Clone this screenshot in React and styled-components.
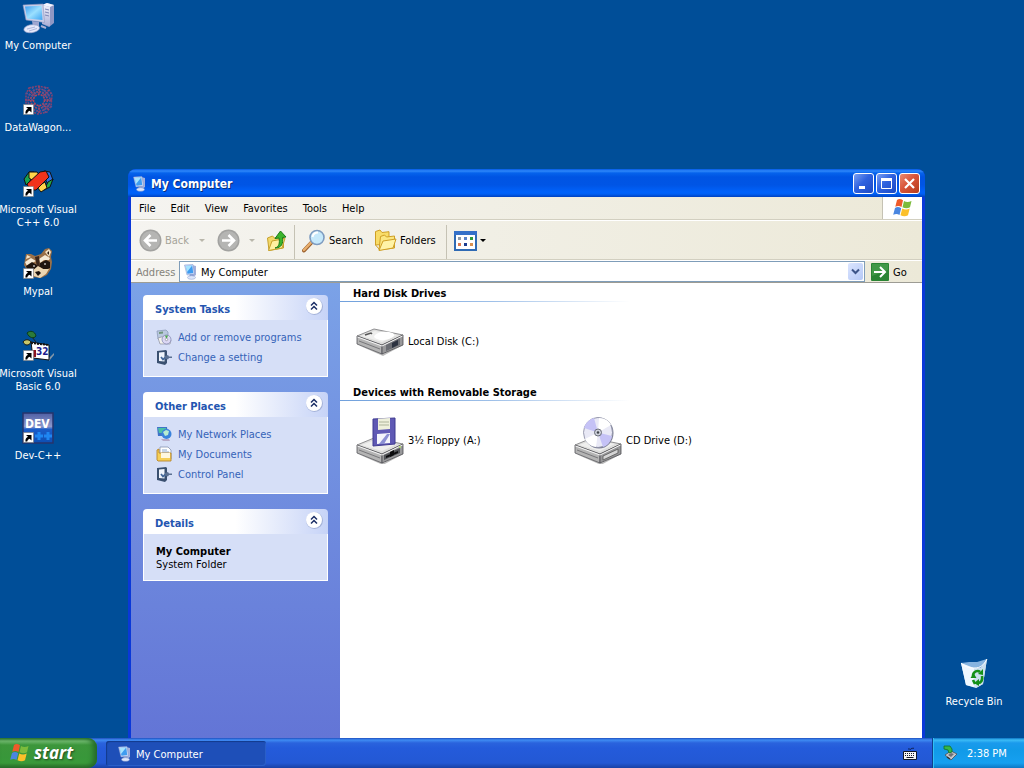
import React from "react";
import styled, { createGlobalStyle } from "styled-components";

const GlobalStyle = createGlobalStyle`
    *, *::before, *::after { box-sizing: border-box; }
    html, body, #root { height: 100%; margin: 0; }
    body, button, input {
        font-family: "DejaVu Sans Condensed", "DejaVu Sans", sans-serif;
        font-size: 11px;
        line-height: 13px;
    }
    body { overflow: hidden; }
    button {
        margin: 0;
        padding: 0;
        border: 0;
        background: none;
        color: inherit;
    }
    svg { display: block; flex: none; }
    h1, h2, h3, p, ul { margin: 0; padding: 0; }
`;

/* ---------- desktop ---------- */

const Desktop = styled.div`
    position: relative;
    display: flex;
    flex-direction: column;
    height: 100%;
    background: #004e98;
    overflow: hidden;
`;

const IconColumn = styled.div`
    flex: 1;
    display: flex;
    flex-direction: column;
    align-items: flex-start;
    min-height: 0;
`;

const Shortcut = styled.button`
    display: flex;
    flex-direction: column;
    align-items: center;
    gap: 5px;
    flex: none;
    width: 76px;
    height: 82px;
    padding-top: 2px;
    color: #fff;
    text-align: center;
`;

const ShortcutLabel = styled.span`
    display: block;
    white-space: pre;
`;

const BinCorner = styled.div`
    position: absolute;
    right: 12px;
    bottom: 30px;
`;

/* ---------- window ---------- */

const Window = styled.section`
    position: absolute;
    left: 128px;
    right: 99px;
    top: 169px;
    bottom: 30px;
    display: flex;
    flex-direction: column;
    padding: 0 3px;
    border-radius: 8px 8px 0 0;
    background: #0a38d8;
    overflow: hidden;
`;

const TitleBar = styled.header`
    display: flex;
    align-items: center;
    gap: 3px;
    flex: none;
    height: 28px;
    margin: 0 -3px;
    padding: 1px 5px 0 4px;
    color: #fff;
    background: linear-gradient(#0058e6 0, #2f88fa 2px, #0663ec 4px, #0054e3 8px, #0055e5 16px, #0062fb 23px, #0060f4 25px, #0041c0 28px);
`;

const TitleText = styled.h1`
    flex: 1;
    padding-top: 1px;
    font-size: 12px;
    line-height: 16px;
    font-weight: bold;
    text-shadow: 1px 1px #0a3078;
`;

const TitleButtons = styled.div`
    display: flex;
    gap: 2px;
`;

const TitleButton = styled.button`
    display: grid;
    place-items: center;
    width: 21px;
    height: 21px;
    border: 1px solid #fff;
    border-radius: 3px;
    background: ${p => p.$close
        ? "linear-gradient(135deg, #e88a70, #d9553a 45%, #b43c1c)"
        : "linear-gradient(135deg, #7a9ff2, #2f62df 45%, #1c49c4)"};
`;

const Bars = styled.div`
    flex: none;
    background: linear-gradient(90deg, #f5f4f0, #ece9d8);
    border-bottom: 1px solid #9d9c94;
`;

const MenuRow = styled.nav`
    display: flex;
    align-items: stretch;
    height: 23px;
    border-bottom: 1px solid #d2cfc0;
`;

const MenuItem = styled.button`
    padding: 0 7px 0 8px;
`;

const FlagBox = styled.div`
    display: grid;
    place-items: center;
    width: 40px;
    margin-left: auto;
    border-left: 1px solid #c5c2b4;
    background: #fff;
`;

const ToolRow = styled.div`
    display: flex;
    align-items: center;
    height: 40px;
    padding: 1px 8px 0;
    border-top: 1px solid #fff;
    border-bottom: 1px solid #d2cfc0;
`;

const ToolButton = styled.button`
    display: flex;
    align-items: center;
    gap: 3px;
    flex: none;
    width: ${p => p.$width}px;
    color: ${p => (p.$off ? "#a5a399" : "#000")};
`;

const Caret = styled.span`
    margin-left: ${p => p.$gap || 0}px;
    border: 3px solid transparent;
    border-top-color: ${p => (p.$off ? "#b9b7ab" : "#000")};
    border-bottom: 0;
`;

const Divider = styled.span`
    align-self: stretch;
    width: 1px;
    margin: 3px 7px 0 6px;
    background: #c5c2b4;
`;

const AddressRow = styled.form`
    display: flex;
    align-items: center;
    height: 22px;
    padding-left: 5px;
    border-top: 1px solid #fff;
`;

const AddressLabel = styled.label`
    width: 43px;
    padding-top: 1px;
    color: #85837a;
`;

const AddressBox = styled.div`
    flex: 1;
    display: flex;
    align-items: center;
    gap: 2px;
    height: 21px;
    padding: 0 1px 0 3px;
    border: 1px solid #7f9db9;
    background: #fff;
`;

const AddressInput = styled.input`
    flex: 1;
    min-width: 0;
    padding: 2px 0 0;
    border: 0;
    outline: 0;
    background: transparent;
    color: #000;
`;

const DropButton = styled.button`
    display: grid;
    place-items: center;
    width: 15px;
    height: 17px;
    border-radius: 2px;
    background: linear-gradient(135deg, #dbe5ff, #b5c8f6);
`;

const GoButton = styled.button`
    display: flex;
    align-items: center;
    gap: 4px;
    width: 57px;
    padding: 1px 0 0 6px;
`;

const Main = styled.div`
    flex: 1;
    display: flex;
    min-height: 0;
    background: #fff;
`;

/* ---------- task pane ---------- */

const Pane = styled.aside`
    display: flex;
    flex-direction: column;
    gap: 15px;
    flex: none;
    width: 209px;
    padding: 12px;
    background: linear-gradient(#7ba2e7, #6375d6);
`;

const PanelHead = styled.button`
    display: flex;
    align-items: flex-start;
    justify-content: space-between;
    width: 100%;
    height: 25px;
    padding: 2px 4px 0 12px;
    border-radius: 4px 4px 0 0;
    background: linear-gradient(90deg, #fff 50%, #c6d3f7);
    color: #2455b0;
    font-weight: bold;
`;

const PanelTitle = styled.span`
    padding-top: 6px;
`;

const PanelBody = styled.div`
    padding: ${p => (p.$text ? "11px 12px 9px" : "7px 12px 9px")};
    border: 1px solid #fff;
    border-top: 0;
    background: #d6dff7;
`;

const PlaceLink = styled.a`
    display: flex;
    align-items: center;
    gap: 6px;
    height: 20px;
    color: #3563b8;
    text-decoration: none;
    white-space: nowrap;
    &:hover { color: #428eff; text-decoration: underline; }
`;

/* ---------- file list ---------- */

const Files = styled.main`
    flex: 1;
    min-width: 0;
`;

const GroupTitle = styled.h2`
    height: 19px;
    padding: 4px 13px 0;
    border-bottom: 1px solid;
    border-image: linear-gradient(90deg, #70a0dc, #9dbfe8 150px, #fff 290px) 1;
    font-size: 11px;
    line-height: 13px;
`;

const FileRow = styled.div`
    display: flex;
    flex-wrap: wrap;
    padding: 15px 16px 17px;
`;

const FileTile = styled.button`
    display: flex;
    align-items: center;
    gap: 4px;
    width: 218px;
`;

/* ---------- taskbar ---------- */

const TaskBar = styled.footer`
    display: flex;
    align-items: stretch;
    flex: none;
    height: 30px;
    color: #fff;
    background: linear-gradient(#1f4fc0 0, #3f8cf3 2px, #2a63dd 5px, #245bdb 10px, #2358d4 25px, #1941a5 30px);
`;

const StartButton = styled.button`
    display: flex;
    align-items: center;
    gap: 4px;
    width: 97px;
    padding-left: 10px;
    border-radius: 0 9px 9px 0;
    background: linear-gradient(#2f7a2f 0, #71bb70 3px, #3c963b 7px, #38973a 20px, #3a9a3a 25px, #2a6f2a 30px);
    box-shadow: inset -4px 0 5px #256b2a;
    color: #fff;
    font-family: "Open Sans", "Noto Sans", sans-serif;
    font-size: 17px;
    line-height: 22px;
    font-style: italic;
    font-weight: bold;
    text-shadow: 1px 1px 2px #20491e;
`;

const TaskButton = styled.button`
    display: flex;
    align-items: center;
    gap: 3px;
    width: 160px;
    margin: 3px 0 2px 9px;
    padding: 1px 0 0 11px;
    border-radius: 3px;
    background: #1e4fb8;
    box-shadow: inset 1px 1px 1px #123a8c, inset -1px -1px #2a5fc8;
`;

const LanguageButton = styled.button`
    margin-left: auto;
    padding: 1px 15px 0;
`;

const Tray = styled.div`
    display: flex;
    align-items: center;
    gap: 9px;
    width: 92px;
    padding: 0 10px 0 9px;
    border-left: 1px solid #10408c;
    background: linear-gradient(#0c73c4 0, #3cbcf6 2px, #1a9aec 5px, #119ae8 12px, #16a0f0 25px, #0d77c4 30px);
    box-shadow: inset 1px 0 #31c0f5;
    white-space: nowrap;
`;

/* ---------- drawings ---------- */

const Svg = ({ size, w, h, box, children }) => (
    <svg width={w || size} height={h || size} viewBox={box || `0 0 ${size} ${size}`} aria-hidden="true">
        {children}
    </svg>
);

const Arrow = () => (
    <g>
        <path d="M1.500 20.500h10v10h-10z" fill="#fff" stroke="#777" strokeWidth=".6" />
        <path d="M4 23h5.500v5.500L7.600 26.700Q5.500 27.500 5.200 29.500L3.400 29.500Q3.300 26 6 24.800z" fill="#000" />
    </g>
);

const ComputerIcon = () => (
    <Svg size={32}>
        <defs>
            <linearGradient id="screen" x2="1" y2="1">
                <stop offset="0" stopColor="#3c9cf0" />
                <stop offset=".5" stopColor="#9be0ff" />
                <stop offset="1" stopColor="#3ea4f2" />
            </linearGradient>
            <linearGradient id="tower" x2="0" y2="1">
                <stop offset="0" stopColor="#f0f1fb" />
                <stop offset="1" stopColor="#a9aed6" />
            </linearGradient>
        </defs>
        <path d="M20 3l5-2 7 2v18l-5 4-7-3z" fill="#8f97c4" />
        <path d="M20 3l8 2v19.500l-8-3z" fill="url(#tower)" />
        <path d="M20 3l5-2 7 2-4 2z" fill="#f4f5ff" />
        <path d="M23 7l4 1M23 10l4 1M23 13l4 1" stroke="#7d86b6" />
        <path d="M1 3l20-1 1.500 18.500L4 18z" fill="#c9cee8" stroke="#8d96c0" strokeWidth=".6" />
        <path d="M3 4.500l16.500-.8 1 14.300L5 16.500z" fill="url(#screen)" />
        <path d="M10 19l7 1v4l-6 1z" fill="#9ea6d0" />
        <path d="M2 27c1-3 6-5 11-4 5 0 6 4 2 6-5 3-14 2-13-2z" fill="#e6e9fa" stroke="#9aa3cb" strokeWidth=".7" />
        <path d="M5 27l8-2M7 29l8-2.500" stroke="#aeb7dc" />
        <path d="M19 24l5 2" stroke="#aab0d4" strokeWidth="2" />
    </Svg>
);

const SmallComputer = () => (
    <Svg size={16}>
        <path d="M9 1l4 1v9l-3 2-2-1z" fill="#a3b0dc" />
        <path d="M1.500 1l8.500-.5 1.500 9.500L4 11z" fill="#cfdcf7" stroke="#7c95cf" strokeWidth=".5" />
        <path d="M2.700 2l6.500-.4 1 7.400L4.500 9.700z" fill="#3f9cf0" />
        <path d="M2.700 2l6.500-.4L4 8z" fill="#a6e3ff" />
        <path d="M7 10h3l1 3H6z" fill="#8fa3d6" />
        <ellipse cx="8.500" cy="13.500" rx="4" ry="1.800" fill="#dde6fb" stroke="#8296c8" strokeWidth=".5" />
    </Svg>
);

const DataWagonIcon = () => (
    <Svg size={32}>
        <g fill="none" stroke="#86406c" strokeWidth="1.600" strokeDasharray="2 1">
            <path d="M7 4l9-2 10 2 4 7-1 11-4 6-9 2-8-3-4-7 0-10z" />
            <circle cx="17" cy="16" r="11" stroke="#7a4880" />
            <circle cx="17" cy="16" r="8.300" stroke="#a34762" />
            <circle cx="17" cy="16" r="5.500" stroke="#b5455a" />
            <path d="M17 2v9M17 21v9M3 16h9M22 16h9M7 6l6 6M21 20l6 6M27 6l-6 6M13 20l-6 6" stroke="#98446a" />
            <path d="M4 9l9 4M30 9l-9 4M10 3l4 8M24 3l-4 8M30 23l-9-4M24 29l-4-8" stroke="#5f5290" />
        </g>
        <Arrow />
    </Svg>
);

const VisualCppIcon = () => (
    <Svg size={32}>
        <g stroke="#111" strokeLinejoin="round">
            <path d="M2 13L7 6l5 0-4 9-4 4z" fill="#18a050" />
            <path d="M7 6h8l3 4-8 4-3-2z" fill="#ffd54a" />
            <path d="M22 5l6 1 3 8-5 4-4-7z" fill="#2b6ee0" />
            <path d="M26 16l5-3-3 8-6 3z" fill="#22a84a" />
            <path d="M15 21l8-5 2 6-6 4z" fill="#ffd54a" />
            <path d="M5 18L18 6l6-1 3 6-13 13-6 0z" fill="#f0331b" />
        </g>
        <Arrow />
    </Svg>
);

const MypalIcon = () => (
    <Svg size={32}>
        <path d="M3 11l1-5 5 0 4 2 6-2 4-5 4-1 3 3-1 6 1 5-1 7-4 6-6 3-8-1-6-7-3-5z" fill="#9a7048" />
        <path d="M4 11l1-4 4 2zM23 4l4-3 2 3-2 5z" fill="#f3e2c6" />
        <path d="M25 5l2-2v4z" fill="#2a1a12" />
        <path d="M3 14l6-4 5 3-4 2-5 3zM17 11l6-4 5 3-1 2-5 0-4 3z" fill="#f6ead6" />
        <path d="M4 18l6-4 5 3 0 5-5 1-5-2zM18 15l6-3 4 2 0 6-5 2-5-3z" fill="#20150f" />
        <path d="M13 9l4-1 1 11-3 0z" fill="#3c271b" />
        <path d="M10 23l6-5 5 3 6 0-3 5-6 4-6-2z" fill="#ecd6b2" />
        <path d="M13 24l4-1 2 2-3 3z" fill="#18100c" />
        <path d="M11 18l2 0M22 16l2 0" stroke="#fff" />
        <Arrow />
    </Svg>
);

const VisualBasicIcon = () => (
    <Svg size={32}>
        <path d="M10 7l4 5" stroke="#222" />
        <path d="M5 3c3-3 8-2 9 3-2 3-7 2-9-3z" fill="#2b7a3a" stroke="#0c3c18" />
        <path d="M1 12c2-3 6-3 8 0-2 4-6 4-8 0z" fill="#c9c76a" stroke="#1d1d10" />
        <path d="M27 28l5-5v2l-5 6z" fill="#8597a8" />
        <path d="M9 12l18 3v15l-16-2z" fill="#fff" stroke="#111" />
        <path d="M9 13l18 2" stroke="#111" strokeWidth="2" strokeDasharray="2 1" />
        <text x="14" y="25" fontSize="10" fontWeight="bold" fill="#1c1c8c">32</text>
        <path d="M11 20h3v7h-3z" fill="#8c1420" />
        <Arrow />
    </Svg>
);

const DevIcon = () => (
    <Svg size={32}>
        <defs>
            <linearGradient id="dev" x2="0" y2="1">
                <stop offset="0" stopColor="#4f5fa4" />
                <stop offset=".45" stopColor="#8c98cc" />
                <stop offset=".55" stopColor="#1a5cc8" />
                <stop offset="1" stopColor="#0d4fb4" />
            </linearGradient>
        </defs>
        <path d="M1 1h30v30H1z" fill="url(#dev)" stroke="#26346c" strokeWidth="1.500" />
        <text x="3" y="16" fontSize="12" fontWeight="bold" fill="#fff">DEV</text>
        <path d="M13 24h8M17 20v8M22 24h8M26 20v8" stroke="#1f86f2" strokeWidth="3" />
        <Arrow />
    </Svg>
);

const RecycleIcon = () => (
    <Svg size={32}>
        <path d="M3 5l14 4L29 1l-4 25-7 4-10-3z" fill="#d7e9f7" />
        <path d="M3 5l8-1 8 0 10-3-6 9-9 0z" fill="#86b4e0" />
        <path d="M3 5l13 5 0 19-8-2z" fill="#eff8ff" />
        <path d="M16 10l7 0 6-9-4 25-7 4z" fill="#cadfee" />
        <path d="M3 5c5 5 10 5 14 5 5 0 9-3 12-9" fill="none" stroke="#fff" />
        <g fill="none" stroke="#149018" strokeWidth="2.600">
            <path d="M15 18c0-5 5-6 7-4" />
            <path d="M24 18c1 4-1 7-4 7" />
            <path d="M17 26l-2-4" />
        </g>
        <path d="M20 16l5-5v6zM21 21v7l-5-3zM12.500 20h6l-3-5z" fill="#149018" />
    </Svg>
);

const FlagIcon = ({ size }) => (
    <Svg w={size} h={size} box="0 0 20 20">
        <path d="M4 2c2-1.500 4-1 6 .3L8.500 9C6.500 7.600 4.500 7.600 2.300 8.700z" fill="#ee5a2a" />
        <path d="M11 3c2 1.200 4.500 1.500 7.500 0L17 9.300c-2.500 1.500-5 1.200-7.500 0z" fill="#7cbb3c" />
        <path d="M2 10c2-1.200 4-1.200 6.200.2L6.500 17c-2-1.500-4-1.300-6.300-.3z" fill="#4a86e0" />
        <path d="M9.200 10.600c2.500 1.200 5 1.400 7.500 0L15 17.200c-2.500 1.500-5 1.200-7.500 0z" fill="#fbc02a" />
    </Svg>
);

const RoundArrow = ({ flip }) => (
    <Svg size={23}>
        <circle cx="11.500" cy="11.500" r="11" fill="#a2a2a0" />
        <circle cx="11.500" cy="11.500" r="9.500" fill="#b5b5b3" />
        <path
            d={flip ? "M5 11.500h12M11.500 6l5.500 5.500-5.500 5.500" : "M18 11.500H6M11.500 6L6 11.500l5.500 5.500"}
            fill="none" stroke="#fff" strokeWidth="2.600"
        />
    </Svg>
);

const UpFolder = () => (
    <Svg size={22}>
        <path d="M1.500 8l5-2 2 2 9-2v12L3 20.500z" fill="#f2d868" stroke="#c6a02c" />
        <path d="M2.500 20.500L6 11l13-2.500-3 9.500z" fill="#fff0a0" stroke="#c6a02c" />
        <path d="M9 18c4-1 5-5 4-10l-4 .5L14.500 1 20 7l-3.500.5c1 6-1 10.500-7.500 10.500z" fill="#3cb52c" stroke="#1c7a18" />
    </Svg>
);

const SearchIcon = () => (
    <Svg size={24}>
        <path d="M2 21.500l8-8.500" stroke="#9a5f2c" strokeWidth="4" strokeLinecap="round" />
        <path d="M2 21l8-8.500" stroke="#e8ae6c" strokeWidth="2.500" strokeLinecap="round" />
        <circle cx="15" cy="8.500" r="7" fill="#c6e9fb" stroke="#7f9cc0" strokeWidth="1.600" />
        <path d="M10.500 8c.5-3 3-4.500 5.500-4.500" fill="none" stroke="#fff" strokeWidth="2" />
    </Svg>
);

const FoldersIcon = () => (
    <Svg size={23}>
        <path d="M1.500 16V2.500L6 1l2 2.500 7-.8V15z" fill="#f8dc68" stroke="#cf9f25" />
        <path d="M5 21L6.500 7.500l4-1.500 2 2 8-1V19z" fill="#fbe680" stroke="#cf9f25" />
        <path d="M5 21.500L9 12l13-2-3 9z" fill="#fff3a6" stroke="#cf9f25" />
        <path d="M1.500 3v13l4.500 5" fill="none" stroke="#cf9f25" />
    </Svg>
);

const ViewsIcon = () => (
    <Svg w={23} h={20} box="0 0 23 20">
        <path d="M1 1h21v18H1z" fill="#fff" stroke="#2f6ab4" strokeWidth="2" />
        <path d="M0 0h23v4H0z" fill="#3470c8" />
        <path d="M4 6h3v3H4z" fill="#8f9aa8" />
        <path d="M10 6h3v3h-3z" fill="#5a83c8" />
        <path d="M16 6h3v3h-3z" fill="#2f9a3c" />
        <path d="M4 12h3v3H4z" fill="#dc7a50" />
        <path d="M10 12h3v3h-3z" fill="#1c3d90" />
        <path d="M16 12h3v3h-3z" fill="#d89050" />
    </Svg>
);

const GoIcon = () => (
    <Svg size={18}>
        <rect width="18" height="18" rx="1" fill="#2a8434" />
        <path d="M1 1h16v6L1 13z" fill="#58ac5a" opacity=".5" />
        <path d="M3 9h11M9 4l5 5-5 5" fill="none" stroke="#fff" strokeWidth="2" />
    </Svg>
);

const ChevronIcon = () => (
    <Svg size={19}>
        <circle cx="9.500" cy="9.500" r="8.500" fill="#a4b2d8" />
        <circle cx="9" cy="9" r="8" fill="#fff" />
        <path d="M6 8.500l3-3 3 3M6 12.500l3-3 3 3" fill="none" stroke="#1c2f66" strokeWidth="1.500" />
    </Svg>
);

const ProgramsIcon = () => (
    <Svg size={16}>
        <path d="M1 2l9-1 2 2v7l-8 2-2-2z" fill="#b9c8de" stroke="#8595b4" strokeWidth=".7" />
        <path d="M3 3l4-.5v2L3 5z" fill="#6f967a" />
        <path d="M2 9l7-2 6 4-1 4H4z" fill="#f3f3ec" stroke="#8c8fa0" strokeWidth=".7" />
        <circle cx="10.500" cy="10.500" r="4.500" fill="#dcd8f4" stroke="#7a7fae" strokeWidth=".7" />
        <path d="M10.500 10.500L9 6.500h3z" fill="#4aa84a" />
        <circle cx="10.500" cy="10.500" r="1.200" fill="#fff" stroke="#667" strokeWidth=".5" />
    </Svg>
);

const SettingIcon = () => (
    <Svg size={16}>
        <path d="M1 2l9-1 1 1v12l-2 2-8-2z" fill="#3a5070" />
        <path d="M3 3.500l5.500-.5v9.500L3 12z" fill="#f0f5fc" />
        <path d="M5 8l2 2.500 3-2.500" fill="none" stroke="#44689a" strokeWidth="1.800" />
        <path d="M9 7l3-1 1 1.500h3v1.500h-3l-1 1.500-3-1z" fill="#5a7092" />
    </Svg>
);

const NetworkIcon = () => (
    <Svg size={16}>
        <path d="M1 1l10 0 1 9-10 0z" fill="#3f74c8" />
        <path d="M2 2h8v5H3z" fill="#4cc0a4" />
        <circle cx="10.500" cy="8" r="5" fill="#3a82dc" />
        <path d="M7 6l3-2 3 1-1 4-3 1z" fill="#b8ecd0" />
        <path d="M5 13l8 0 1 2H7z" fill="#b7a9c6" />
    </Svg>
);

const DocumentsIcon = () => (
    <Svg size={16}>
        <path d="M4 1h8l3 3v9H4z" fill="#fff" stroke="#8793b0" strokeWidth=".8" />
        <path d="M6 4h5M6 6h7" stroke="#8faad0" />
        <path d="M1 4l2-1v4h12v8H2L1 14z" fill="#f6cf58" stroke="#b8862a" strokeWidth=".9" />
        <path d="M5 7h9v5H5z" fill="#fff8e0" />
    </Svg>
);

/* flat box shared by the three drives */
const DriveBase = ({ top }) => (
    <g transform={`translate(0 ${top})`}>
        <path d="M2 17l25 9 20-9-20 11z" fill="#555" opacity=".4" />
        <path d="M1 8L18 1l29 6-21 10z" fill="#dededd" stroke="#77777a" strokeWidth=".8" />
        <path d="M5 8L19 3l22 4-15 7z" fill="#efefee" />
        <path d="M1 8l25 9v9L1 16z" fill="#b4b4b4" stroke="#55555a" strokeWidth=".8" />
        <path d="M26 17L47 7v10L26 26z" fill="#98989a" stroke="#4c4c50" strokeWidth=".8" />
        <path d="M1.500 9l24.500 9 20.500-10" fill="none" stroke="#f4f4f4" />
        <path d="M3 13l21 8" stroke="#77777a" />
    </g>
);

const HardDiskIcon = () => (
    <Svg size={48}>
        <DriveBase top={11} />
        <path d="M18 20c1-4 8-6 15-5 6 1 7 4 2 6-6 3-13 3-17-1z" fill="#fff" />
        <path d="M9 18l6-2 1 1" fill="none" stroke="#555" strokeWidth="1.500" />
        <path d="M30 28l14-7v7l-14 6z" fill="#6a6c72" />
        <path d="M36 26l6-3v5l-6 3z" fill="#2c3240" />
    </Svg>
);

const FloppyIcon = () => (
    <Svg size={48}>
        <DriveBase top={21} />
        <path d="M17 3l22-1v26l-22 2z" fill="#5f59b4" stroke="#3f3a90" />
        <path d="M22 2.500l12-.5v11l-12 1z" fill="#eef0dc" />
        <path d="M23 6h10M23 9h10" stroke="#aeb49a" />
        <path d="M21 18l13-1v10l-13 1z" fill="#f4f5fc" />
        <path d="M23 28l8-10 3 0-6 10z" fill="#8c90d4" />
        <path d="M28 39l16-7v5l-16 7z" fill="#505256" />
        <path d="M30 40l12-5v2l-12 5z" fill="#0c0c0e" />
        <path d="M34 36l4-2v5l-4 2z" fill="#0c0c0e" />
        <circle cx="44" cy="31" r="1" fill="#b5e36a" />
    </Svg>
);

const CdIcon = () => (
    <Svg size={48}>
        <DriveBase top={21} />
        <ellipse cx="25" cy="17" rx="14.500" ry="15.500" fill="#7f8298" />
        <ellipse cx="24" cy="16.500" rx="14.500" ry="15" fill="#e9e9f6" stroke="#85889e" strokeWidth=".8" />
        <path d="M24 16.500L10 12c2-6 6-9 10-10zM24 16.500L38 20c-1 6-5 10-9 11z" fill="#c5c2f6" />
        <path d="M24 16.500L25 2c6 0 10 3 12 7zM24 16.500L22 31c-6-1-9-4-11-8z" fill="#fff" />
        <circle cx="24" cy="16.500" r="3.500" fill="#cfd2dc" stroke="#6a6d78" />
        <circle cx="24" cy="16.500" r="1.300" fill="#42454c" />
        <path d="M29 40l15-7v4l-15 7z" fill="#d5d5d5" stroke="#555" strokeWidth=".8" />
    </Svg>
);

const KeyboardIcon = () => (
    <Svg w={14} h={13} box="0 0 14 13">
        <path d="M5 2.500c1-2 2 1 3-.5s2 0 3-1" fill="none" stroke="#0b1c48" />
        <path d="M.5 4.500h13v8H.5z" fill="#f4f4f4" stroke="#101828" />
        <path d="M2 6.500h10M2 8.500h10" stroke="#101828" strokeDasharray="1 1" />
        <path d="M3.500 10.500h7" stroke="#101828" />
    </Svg>
);

const TrayIcon = () => (
    <Svg size={16}>
        <path d="M3 10l6-4 6 3-6 6z" fill="#c3c7cc" stroke="#4a4e55" strokeWidth=".8" />
        <path d="M6 10l3-2 3 1-3 3z" fill="#6c7178" />
        <path d="M2 1l6 0 2 3 0 3-3 1-1-3-4-1z" fill="#35b848" stroke="#13702a" strokeWidth=".8" />
        <path d="M5 12l3 2" stroke="#333" strokeWidth="1.500" />
    </Svg>
);

/* ---------- content ---------- */

const shortcuts = [
    { label: "My Computer", icon: <ComputerIcon /> },
    { label: "DataWagon...", icon: <DataWagonIcon /> },
    { label: "Microsoft Visual\nC++ 6.0", icon: <VisualCppIcon /> },
    { label: "Mypal", icon: <MypalIcon /> },
    { label: "Microsoft Visual\nBasic 6.0", icon: <VisualBasicIcon /> },
    { label: "Dev-C++", icon: <DevIcon /> },
];

const menus = ["File", "Edit", "View", "Favorites", "Tools", "Help"];

const tasks = [
    { label: "Add or remove programs", icon: <ProgramsIcon /> },
    { label: "Change a setting", icon: <SettingIcon /> },
];

const places = [
    { label: "My Network Places", icon: <NetworkIcon /> },
    { label: "My Documents", icon: <DocumentsIcon /> },
    { label: "Control Panel", icon: <SettingIcon /> },
];

const groups = [
    { title: "Hard Disk Drives", items: [{ label: "Local Disk (C:)", icon: <HardDiskIcon /> }] },
    {
        title: "Devices with Removable Storage",
        items: [
            { label: "3½ Floppy (A:)", icon: <FloppyIcon /> },
            { label: "CD Drive (D:)", icon: <CdIcon /> },
        ],
    },
];

const DesktopShortcut = ({ label, icon }) => (
    <Shortcut>
        {icon}
        <ShortcutLabel>{label}</ShortcutLabel>
    </Shortcut>
);

const Panel = ({ title, links, children }) => (
    <section>
        <PanelHead>
            <PanelTitle>{title}</PanelTitle>
            <ChevronIcon />
        </PanelHead>
        <PanelBody $text={!links}>
            {links && links.map(link => (
                <PlaceLink href="#" key={link.label}>{link.icon}{link.label}</PlaceLink>
            ))}
            {children}
        </PanelBody>
    </section>
);

const Explorer = () => (
    <Window>
        <TitleBar>
            <SmallComputer />
            <TitleText>My Computer</TitleText>
            <TitleButtons>
                <TitleButton aria-label="Minimize">
                    <Svg size={15}><path d="M3 10h6v3H3z" fill="#fff" /></Svg>
                </TitleButton>
                <TitleButton aria-label="Maximize">
                    <Svg size={15}>
                        <path d="M2.500 3.500h10v9h-10z" fill="none" stroke="#fff" />
                        <path d="M2 2h11v3H2z" fill="#fff" />
                    </Svg>
                </TitleButton>
                <TitleButton $close aria-label="Close">
                    <Svg size={15}><path d="M3 3l9 9M12 3l-9 9" stroke="#fff" strokeWidth="2.200" /></Svg>
                </TitleButton>
            </TitleButtons>
        </TitleBar>
        <Bars>
            <MenuRow>
                {menus.map(name => <MenuItem key={name}>{name}</MenuItem>)}
                <FlagBox><FlagIcon size={20} /></FlagBox>
            </MenuRow>
            <ToolRow>
                <ToolButton $off $width={78}><RoundArrow />Back<Caret $off $gap={7} /></ToolButton>
                <ToolButton $off $width={49} aria-label="Forward"><RoundArrow flip /><Caret $off $gap={6} /></ToolButton>
                <ToolButton $width={22} aria-label="Up"><UpFolder /></ToolButton>
                <Divider />
                <ToolButton $width={72}><SearchIcon />Search</ToolButton>
                <ToolButton $width={66}><FoldersIcon />Folders</ToolButton>
                <Divider />
                <ToolButton $width={36} aria-label="Views"><ViewsIcon /><Caret /></ToolButton>
            </ToolRow>
            <AddressRow onSubmit={e => e.preventDefault()}>
                <AddressLabel htmlFor="address">Address</AddressLabel>
                <AddressBox>
                    <SmallComputer />
                    <AddressInput id="address" defaultValue="My Computer" />
                    <DropButton type="button" aria-label="Show addresses">
                        <Svg size={9}><path d="M1 2.500l3.500 3.500L8 2.500" fill="none" stroke="#3c5488" strokeWidth="2" /></Svg>
                    </DropButton>
                </AddressBox>
                <GoButton><GoIcon />Go</GoButton>
            </AddressRow>
        </Bars>
        <Main>
            <Pane>
                <Panel title="System Tasks" links={tasks} />
                <Panel title="Other Places" links={places} />
                <Panel title="Details">
                    <p><b>My Computer</b></p>
                    <p>System Folder</p>
                </Panel>
            </Pane>
            <Files>
                {groups.map(group => (
                    <section key={group.title}>
                        <GroupTitle>{group.title}</GroupTitle>
                        <FileRow>
                            {group.items.map(item => (
                                <FileTile key={item.label}>{item.icon}{item.label}</FileTile>
                            ))}
                        </FileRow>
                    </section>
                ))}
            </Files>
        </Main>
    </Window>
);

const App = () => {
    return (
        <>
            <GlobalStyle />
            <Desktop>
                <IconColumn>
                    {shortcuts.map(s => <DesktopShortcut key={s.label} {...s} />)}
                </IconColumn>
                <BinCorner>
                    <DesktopShortcut label="Recycle Bin" icon={<RecycleIcon />} />
                </BinCorner>
                <Explorer />
                <TaskBar>
                    <StartButton><FlagIcon size={20} />start</StartButton>
                    <TaskButton><SmallComputer />My Computer</TaskButton>
                    <LanguageButton aria-label="Keyboard"><KeyboardIcon /></LanguageButton>
                    <Tray>
                        <TrayIcon />
                        <time>2:38 PM</time>
                    </Tray>
                </TaskBar>
            </Desktop>
        </>
    );
};

export default App;
